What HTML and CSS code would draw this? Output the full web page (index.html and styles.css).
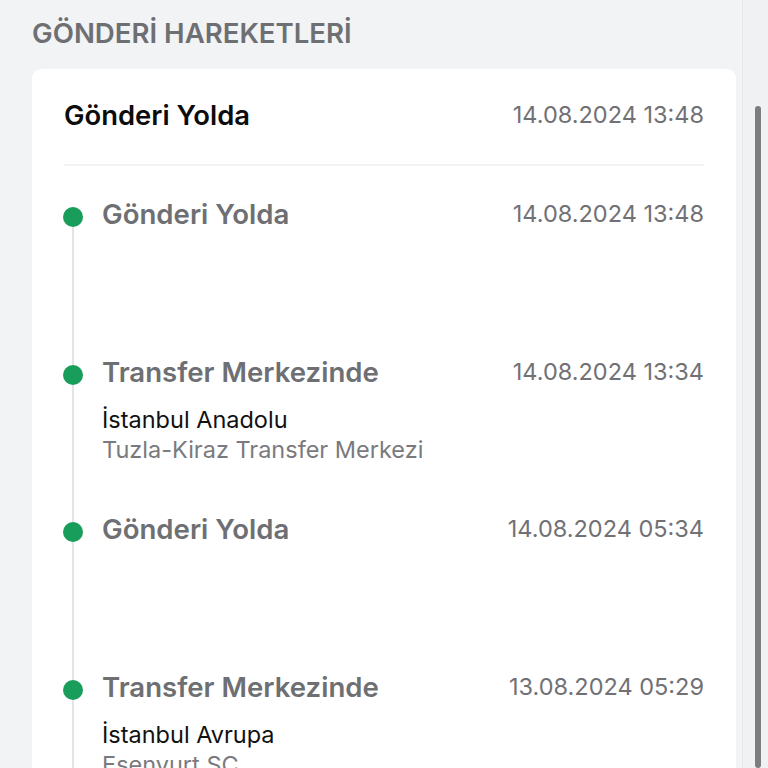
FILE: index.html
```html
<!DOCTYPE html>
<html lang="tr">

<head>
    <meta charset="UTF-8">
    <meta name="viewport" content="width=device-width, initial-scale=1.0">
    <title>Gönderi Hareketleri</title>
    <link rel="stylesheet" href="styles.css">
</head>

<body>
    <h2 class="section-title">GÖNDERİ HAREKETLERİ</h2>

    <div class="card">
        <div class="card-head">
            <span class="status">Gönderi Yolda</span>
            <span class="date">14.08.2024 13:48</span>
        </div>

        <ul class="timeline">
            <li class="item">
                <div class="marker"><span class="dot"></span></div>
                <div class="body">
                    <div class="row">
                        <span class="title">Gönderi Yolda</span>
                        <span class="date">14.08.2024 13:48</span>
                    </div>
                    <div class="details"></div>
                </div>
            </li>
            <li class="item">
                <div class="marker"><span class="dot"></span></div>
                <div class="body">
                    <div class="row">
                        <span class="title">Transfer Merkezinde</span>
                        <span class="date">14.08.2024 13:34</span>
                    </div>
                    <div class="details">
                        <div class="city">İstanbul Anadolu</div>
                        <div class="place">Tuzla-Kiraz Transfer Merkezi</div>
                    </div>
                </div>
            </li>
            <li class="item">
                <div class="marker"><span class="dot"></span></div>
                <div class="body">
                    <div class="row">
                        <span class="title">Gönderi Yolda</span>
                        <span class="date">14.08.2024 05:34</span>
                    </div>
                    <div class="details"></div>
                </div>
            </li>
            <li class="item">
                <div class="marker"><span class="dot"></span></div>
                <div class="body">
                    <div class="row">
                        <span class="title">Transfer Merkezinde</span>
                        <span class="date">13.08.2024 05:29</span>
                    </div>
                    <div class="details">
                        <div class="city">İstanbul Avrupa</div>
                        <div class="place">Esenyurt SC</div>
                    </div>
                </div>
            </li>
        </ul>
    </div>

    <!-- fake scrollbar, page is shown scrolled -->
    <div class="scrollbar"><div class="thumb"></div></div>
</body>

</html>
```

FILE: styles.css
```css
html,
body {
    margin: 0;
    height: 100%;
    overflow: hidden;
}

body {
    background-color: #f2f3f5;
    font-family: Inter, "Noto Sans", sans-serif;
    color: #111;
}

/* page heading */
.section-title {
    margin: 0;
    padding: 16px 32px 14px;
    font-size: 27.6px;
    line-height: 34px;
    font-weight: 600;
    color: #6e6f73;
}

/* white card */
.card {
    width: 704px;
    margin-left: 32px;
    margin-top: 5px;
    box-sizing: border-box;
    background-color: #fff;
    border-radius: 9px;
    padding: 0 32px;
}

.card-head {
    display: flex;
    justify-content: space-between;
    align-items: center;
    padding: 28px 0 31px;
    line-height: 36px;
    border-bottom: 2px solid #f2f2f4;
}

.status {
    font-size: 27.4px;
    font-weight: 600;
    color: #0c0c0c;
}

.date {
    font-size: 23.5px;
    color: #717175;
}

/* timeline */
.timeline {
    list-style: none;
    margin: 0;
    padding: 30px 0 0;
}

.item {
    display: flex;
    gap: 19px;
    margin-left: -1px;
}

.marker {
    width: 20px;
    display: flex;
    flex-direction: column;
    align-items: center;
    flex-shrink: 0;
}

.marker::before {
    content: "";
    width: 2px;
    height: 11px;
    background-color: #e4e4e6;
}

.item:first-child .marker::before {
    background-color: transparent;
}

.marker::after {
    content: "";
    width: 2px;
    flex: 1;
    background-color: #e4e4e6;
}

.dot {
    width: 20px;
    height: 20px;
    border-radius: 50%;
    background-color: #189d5a;
    flex-shrink: 0;
}

.body {
    flex: 1;
    padding-bottom: 46.5px;
}

.row {
    display: flex;
    justify-content: space-between;
    align-items: center;
    line-height: 36px;
}

.title {
    font-size: 27.6px;
    font-weight: 600;
    color: #6e6f73;
}

.details {
    margin-top: 15px;
    min-height: 60px;
    font-size: 23.5px;
    line-height: 30px;
}

.city {
    color: #111;
}

.place {
    color: #7a7a7e;
}

/* scrollbar drawn on top of the page edge */
.scrollbar {
    position: fixed;
    top: 0;
    right: 0;
    bottom: 0;
    width: 25px;
    background-color: #f0f1f3;
    border-left: 1px solid #e8e9eb;
}

.thumb {
    position: absolute;
    top: 106px;
    bottom: 0;
    left: 12px;
    width: 6px;
    border-radius: 3px;
    background-color: #7d7d80;
}
```
